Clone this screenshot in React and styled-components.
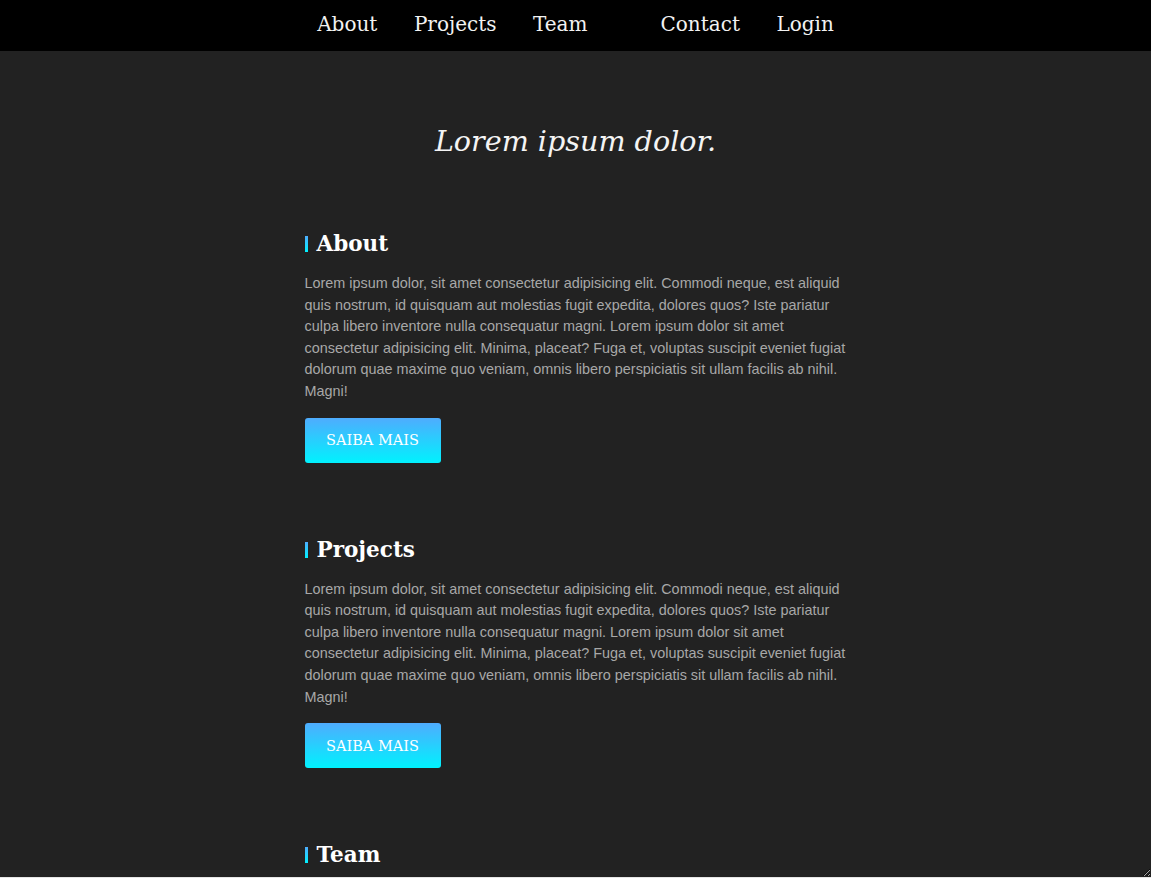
import React from "react";
import styled, { createGlobalStyle } from "styled-components";

const Global = createGlobalStyle`
  html, body { margin: 0; padding: 0; background: #e6e6e6; }
  body { font-family: "DejaVu Serif", serif; overflow: hidden; }
  * { box-sizing: border-box; }
`;

const Nav = styled.nav`
  height: 51px;
  padding-bottom: 3px;
  background: #000;
  display: flex;
  justify-content: center;
  align-items: center;
`;

const NavList = styled.ul`
  display: flex;
  gap: 36.5px;
  list-style: none;
  margin: 0;
  padding: 0;
`;

const NavItem = styled.li`
  font-family: "DejaVu Serif", serif;
  font-size: 20px;
  color: #f2f2f2;
  width: ${(p) => (p.$spacer ? "0" : "auto")};
`;

const Main = styled.main`
  height: calc(100vh - 52px);
  background: #222;
  overflow-y: scroll;
  resize: vertical;
  padding: 74px 0 600px;
  &::-webkit-scrollbar { width: 8px; }
  &::-webkit-scrollbar-track { background: #222; }
  &::-webkit-scrollbar-thumb {
    background: #1f1f1f;
    border: 1px solid #1b1b1b;
    border-radius: 4px;
  }
`;

const Title = styled.h1`
  margin: 0 0 73px;
  text-align: center;
  font-family: "DejaVu Serif", serif;
  font-style: italic;
  font-weight: normal;
  font-size: 28.6px;
  line-height: 33px;
  color: #f4f4f4;
`;

const Content = styled.div`
  width: 542px;
  margin: 0 auto;
  display: flex;
  flex-direction: column;
  gap: 74px;
`;

const Section = styled.section`
  display: flex;
  flex-direction: column;
  align-items: flex-start;
`;

const Heading = styled.h2`
  margin: 0 0 16px;
  display: flex;
  align-items: center;
  gap: 9px;
  font-family: "DejaVu Serif", serif;
  font-weight: bold;
  font-size: 21.5px;
  line-height: 26px;
  color: #fff;
  &::before {
    content: "";
    width: 3px;
    height: 16px;
    background: linear-gradient(#4facfe, #00f2fe);
  }
`;

const Text = styled.p`
  margin: 0 0 15px;
  font-family: "Liberation Sans", Arial, sans-serif;
  font-size: 14.4px;
  line-height: 21.6px;
  color: #a8a8a8;
`;

const Button = styled.button`
  width: 136px;
  height: 45px;
  border: none;
  border-radius: 3px;
  background: linear-gradient(#4facfe, #00f2fe);
  color: #fff;
  font-family: "DejaVu Serif", serif;
  font-size: 14.5px;
  cursor: pointer;
`;

const lorem =
  "Lorem ipsum dolor, sit amet consectetur adipisicing elit. Commodi neque, est aliquid quis nostrum, id quisquam aut molestias fugit expedita, dolores quos? Iste pariatur culpa libero inventore nulla consequatur magni. Lorem ipsum dolor sit amet consectetur adipisicing elit. Minima, placeat? Fuga et, voluptas suscipit eveniet fugiat dolorum quae maxime quo veniam, omnis libero perspiciatis sit ullam facilis ab nihil. Magni!";

const sections = ["About", "Projects", "Team", "Contact"];

export default function App() {
  return (
    <>
      <Global />
      <Nav>
        <NavList>
          <NavItem>About</NavItem>
          <NavItem>Projects</NavItem>
          <NavItem>Team</NavItem>
          <NavItem $spacer />
          <NavItem>Contact</NavItem>
          <NavItem>Login</NavItem>
        </NavList>
      </Nav>
      <Main>
        <Title>Lorem ipsum dolor.</Title>
        <Content>
          {sections.map((s) => (
            <Section key={s}>
              <Heading>{s}</Heading>
              <Text>{lorem}</Text>
              <Button>SAIBA MAIS</Button>
            </Section>
          ))}
        </Content>
      </Main>
    </>
  );
}
